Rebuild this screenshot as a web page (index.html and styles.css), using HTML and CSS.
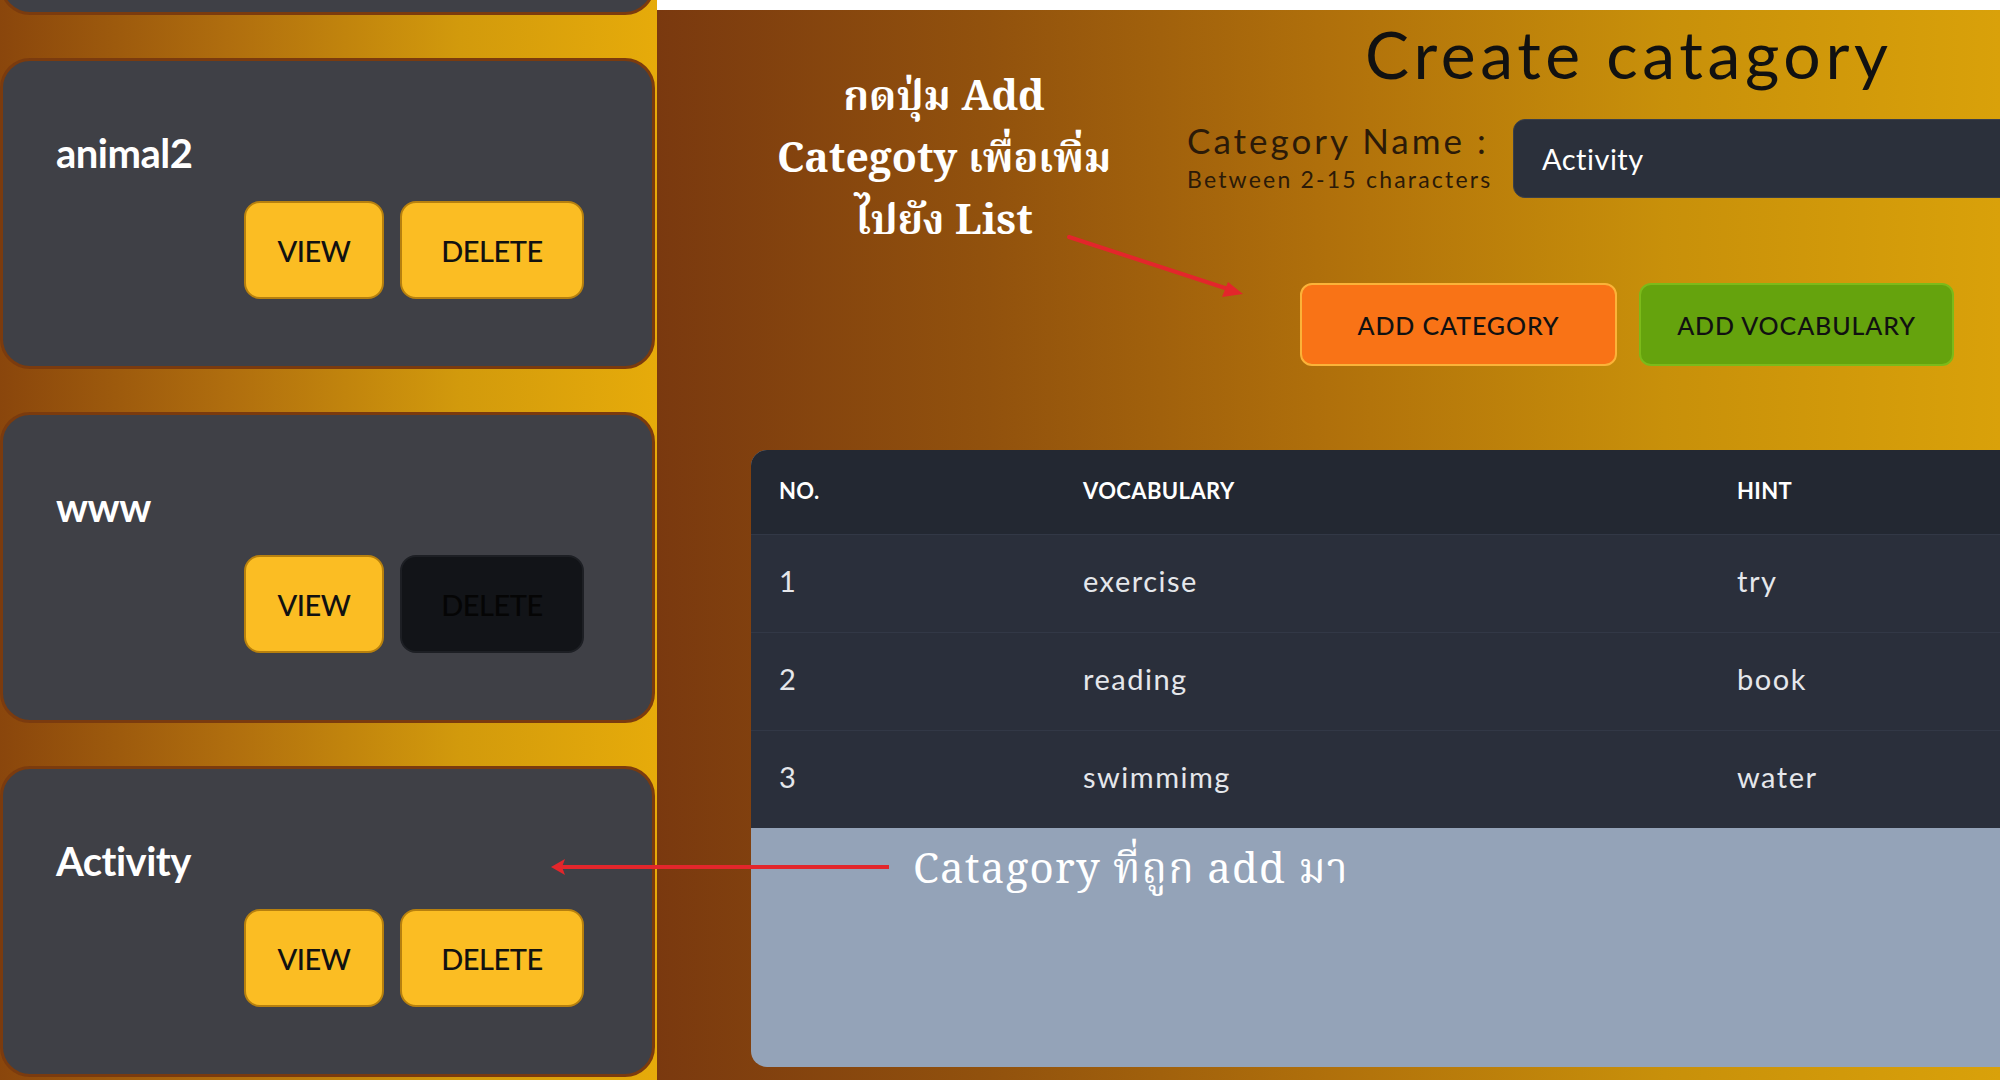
FILE: index.html
```html
<!DOCTYPE html>
<html lang="th">
<head>
<meta charset="utf-8">
<title>Create catagory</title>
<link rel="stylesheet" href="styles.css">
</head>
<body>
  <aside class="sidebar">
    <div class="card-list">
      <div class="card"></div>
      <div class="card">
        <div class="card-title">animal2</div>
        <div class="card-actions">
          <button class="btn-yellow btn-view">VIEW</button>
          <button class="btn-yellow btn-delete">DELETE</button>
        </div>
      </div>
      <div class="card">
        <div class="card-title">www</div>
        <div class="card-actions">
          <button class="btn-yellow btn-view">VIEW</button>
          <button class="btn-dark btn-delete">DELETE</button>
        </div>
      </div>
      <div class="card">
        <div class="card-title">Activity</div>
        <div class="card-actions">
          <button class="btn-yellow btn-view">VIEW</button>
          <button class="btn-yellow btn-delete">DELETE</button>
        </div>
      </div>
    </div>
  </aside>

  <main class="main">
    <div class="topbar"></div>
    <div class="main-body">
      <section class="form">
        <h1 class="form-title">Create catagory</h1>
        <div class="form-row">
          <div class="form-label">
            <div class="label-main">Category Name :</div>
            <div class="label-sub">Between 2-15 characters</div>
          </div>
          <div class="form-input">Activity</div>
        </div>
        <div class="form-actions">
          <button class="btn-orange">ADD CATEGORY</button>
          <button class="btn-green">ADD VOCABULARY</button>
        </div>
      </section>

      <section class="table-box">
        <table class="vocab">
          <thead>
            <tr><th class="col-no">NO.</th><th class="col-voc">VOCABULARY</th><th>HINT</th></tr>
          </thead>
          <tbody>
            <tr><td>1</td><td>exercise</td><td>try</td></tr>
            <tr><td>2</td><td>reading</td><td>book</td></tr>
            <tr><td>3</td><td>swimmimg</td><td>water</td></tr>
          </tbody>
        </table>
      </section>
    </div>
  </main>

  <div class="note note-add">กดปุ่ม Add<br>Categoty เพื่อเพิ่ม<br>ไปยัง List</div>
  <div class="note note-list">Catagory ที่ถูก add มา</div>

  <svg class="arrows" width="2000" height="1080" viewBox="0 0 2000 1080">
    <line x1="1069" y1="237" x2="1228" y2="289" stroke="#e3262b" stroke-width="4" stroke-linecap="round"/>
    <polygon points="1243,294 1222,297 1228,282" fill="#e3262b"/>
    <line x1="889" y1="867" x2="562" y2="867" stroke="#e3262b" stroke-width="4"/>
    <polygon points="551,867 565,859 562,867 565,875" fill="#e3262b"/>
  </svg>
</body>
</html>
```
FILE: styles.css
```css
html, body {
  margin: 0;
  padding: 0;
}

body {
  width: 2000px;
  height: 1080px;
  overflow: hidden;
  display: flex;
  position: relative;
  font-family: "Lato", "Noto Sans", sans-serif;
}

button {
  font-family: inherit;
  cursor: pointer;
  padding: 0;
}

/* ---------- sidebar ---------- */
.sidebar {
  width: 657px;
  flex: none;
  height: 1080px;
  overflow: hidden;
  background: linear-gradient(90deg, #8a460c 0%, #b06e0e 35%, #d29a0c 70%, #e6ab0a 100%);
}

.card-list {
  display: flex;
  flex-direction: column;
  gap: 43px;
  margin-top: -296px;
}

.card {
  box-sizing: border-box;
  width: 655px;
  height: 311px;
  background: #3f4046;
  border: 3px solid #7b3b0e;
  border-radius: 30px;
  padding: 66px 68px 0 53px;
}

.card-title {
  color: #ffffff;
  font-size: 40px;
  font-weight: 700;
  line-height: 52px;
  letter-spacing: -0.5px;
}

.card-actions {
  display: flex;
  justify-content: flex-end;
  gap: 16px;
  margin-top: 22px;
}

.btn-yellow,
.btn-dark {
  height: 98px;
  border-radius: 16px;
  font-size: 29px;
  font-weight: 500;
  letter-spacing: -0.5px;
}

.btn-view {
  width: 140px;
}

.btn-delete {
  width: 184px;
}

.btn-yellow {
  background: #fbbd23;
  border: 2px solid #b7800e;
  color: #111;
}

.btn-dark {
  background: #121418;
  border: 2px solid #1d1f24;
  color: #050505;
}

/* ---------- main ---------- */
.main {
  flex: 1;
  display: flex;
  flex-direction: column;
  min-width: 0;
}

.topbar {
  height: 10px;
  background: #ffffff;
  flex: none;
}

.main-body {
  flex: 1;
  background: linear-gradient(90deg, #7a390f 0%, #92520d 25%, #b0700b 50%, #c8900a 75%, #d9a10a 100%);
  overflow: hidden;
}

.form {
  margin-left: 530px;
  width: 900px;
}

.form-title {
  margin: 4px 0 0 178px;
  font-size: 66px;
  line-height: 80px;
  font-weight: 400;
  color: #111111;
  letter-spacing: 4.6px;
  white-space: nowrap;
}

.form-row {
  display: flex;
  gap: 26px;
  margin-top: 25px;
}

.form-label {
  flex: none;
  width: 300px;
  padding-top: 1px;
  color: #2b1a08;
  white-space: nowrap;
}

.label-main {
  font-size: 35px;
  line-height: 40px;
  letter-spacing: 3px;
}

.label-sub {
  margin-top: 4px;
  font-size: 23px;
  line-height: 30px;
  letter-spacing: 2.2px;
}

.form-input {
  box-sizing: border-box;
  width: 600px;
  height: 79px;
  background: #2b303b;
  border: 1px solid #3a3f4a;
  border-radius: 12px;
  color: #ffffff;
  font-size: 29px;
  line-height: 77px;
  padding-left: 28px;
  letter-spacing: 0.5px;
}

.form-actions {
  display: flex;
  gap: 22px;
  margin: 85px 0 0 113px;
}

.btn-orange,
.btn-green {
  height: 83px;
  border-radius: 12px;
  font-size: 25px;
  font-weight: 500;
  color: #111;
  letter-spacing: 0.9px;
}

.btn-orange {
  width: 317px;
  background: #f97316;
  border: 2px solid #fbb338;
}

.btn-green {
  width: 315px;
  background: #65a30d;
  border: 2px solid #7cba1a;
}

/* ---------- table ---------- */
.table-box {
  margin: 84px 0 0 94px;
  width: 1320px;
  height: 617px;
  background: #94a3b8;
  border-radius: 16px;
  overflow: hidden;
}

.vocab {
  width: 100%;
  border-collapse: collapse;
  color: #e5e7eb;
}

.vocab th {
  box-sizing: border-box;
  height: 84px;
  background: #232832;
  text-align: left;
  font-size: 22px;
  font-weight: 700;
  color: #ffffff;
  letter-spacing: 0.4px;
  padding: 0 0 2px 0;
}

.vocab td {
  box-sizing: border-box;
  height: 98px;
  background: #2a2f3b;
  border-top: 1px solid #323846;
  font-size: 29px;
  letter-spacing: 1.5px;
  padding: 0 0 5px 0;
}

.vocab th:first-child,
.vocab td:first-child {
  padding-left: 28px;
}

.col-no {
  width: 332px;
}

.col-voc {
  width: 654px;
}

/* ---------- annotations ---------- */
.note {
  position: absolute;
  color: #ffffff;
  font-family: "Noto Serif Thai", "Noto Sans Thai", "Garuda", "Loma", "Liberation Serif", serif;
}

.note-add {
  left: 744px;
  top: 68px;
  width: 400px;
  text-align: center;
  font-size: 41px;
  font-weight: 700;
  line-height: 62px;
}

.note-list {
  left: 913px;
  top: 846px;
  font-size: 42px;
  line-height: 52px;
  letter-spacing: 1.2px;
}

.arrows {
  position: absolute;
  left: 0;
  top: 0;
  pointer-events: none;
}
```
